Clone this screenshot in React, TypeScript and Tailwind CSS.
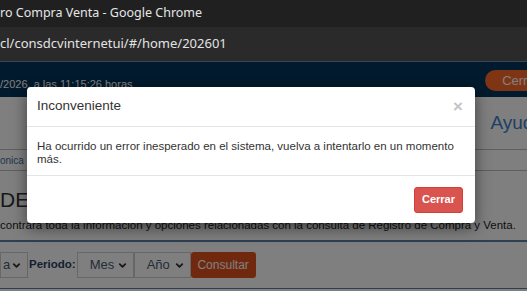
import { ChevronDown } from "lucide-react";

const arial = { fontFamily: '"Liberation Sans", Arial, sans-serif' };

function FakeSelect({ label, className }: { label: string; className: string }) {
  return (
    <div
      className={`flex h-[26px] items-center justify-between border border-[#cfcfcf] bg-white pr-[5px] text-[13px] text-[#4a5a70] ${className}`}
    >
      <span>{label}</span>
      <ChevronDown className="h-[11px] w-[11px] text-[#333]" strokeWidth={4} />
    </div>
  );
}

export default function App() {
  return (
    <div className="flex h-[291px] w-[527px] flex-col overflow-hidden bg-white">
      {/* chrome title bar */}
      <div
        className="flex h-[27px] shrink-0 items-center bg-[#202020] text-[12.5px] text-[#e6e6e6]"
        style={{ fontFamily: '"Noto Sans", sans-serif' }}
      >
        <span className="whitespace-nowrap">ro Compra Venta - Google Chrome</span>
      </div>
      {/* address bar */}
      <div
        className="flex h-[35px] shrink-0 items-center border-b border-[#3d4650] bg-[#2a2a2a] text-[13px] text-[#e3e3e3]"
        style={{ fontFamily: '"Noto Sans", sans-serif' }}
      >
        <span className="whitespace-nowrap">cl/consdcvinternetui/#/home/202601</span>
      </div>

      {/* page */}
      <div className="relative flex-1" style={arial}>
        <div className="flex h-[35px] justify-between overflow-hidden bg-[#04345a]">
          <span className="mt-[17px] whitespace-nowrap text-[11px] leading-none text-white">
            /2026, a las 11:15:26 horas
          </span>
          <div className="-mr-[28px] mt-[8px] flex h-[21px] shrink-0 items-center rounded-full bg-[#ff6a26] pl-[17px] pr-4 text-[13px] text-white">
            Cerrar
          </div>
        </div>

        <div className="flex h-[52px] items-center justify-end overflow-hidden">
          <span className="-mr-[17px] shrink-0 text-[19px] text-[#3a82c8]">Ayuda</span>
        </div>

        <div className="flex h-[22px] border-y border-[#bcbcbc]">
          <div className="flex items-center border-r border-[#bcbcbc] pr-1 text-[10px] text-[#3a6fa0]">
            onica
          </div>
        </div>

        <div className="pt-[18px] text-[21px] leading-none text-[#333]">DE COMPRAS Y VENTAS</div>
        <div className="mt-[8px] whitespace-nowrap text-[11.5px] leading-[14px] text-[#222]">
          contrará toda la información y opciones relacionadas con la consulta de Registro de Compra y Venta.
        </div>

        <div className="mt-[8px] h-[2px] bg-[#5d7ea8]" />

        <div className="mt-[10px] flex items-center">
          <FakeSelect label="a" className="w-[28px] pl-[2px]" />
          <span className="mx-[1px] text-[11.5px] font-bold text-[#283e64]">Periodo:</span>
          <FakeSelect label="Mes" className="w-[57px] pl-[12px]" />
          <FakeSelect label="Año" className="w-[57px] pl-[12px]" />
          <div className="flex h-[26px] w-[65px] items-center justify-center rounded-[3px] bg-[#e0521c] text-[12px] text-white">
            Consultar
          </div>
        </div>
        <div className="mt-[10px] h-[1px] bg-[#5d7ea8]" />

        {/* backdrop */}
        <div className="absolute inset-0 bg-black/50" />

        {/* modal */}
        <div className="absolute left-[27px] top-[25px] w-[448px] rounded-[4px] bg-white shadow-[0_5px_15px_rgba(0,0,0,0.5)]">
          <div className="flex h-[40px] items-center justify-between border-b border-[#e5e5e5] pl-[10px] pr-[12px]">
            <span className="text-[13.5px] text-[#333]">Inconveniente</span>
            <span className="text-[17px] font-bold leading-none text-[#c4c4c4]">×</span>
          </div>
          <div className="h-[49px] border-b border-[#e5e5e5] px-[10px] pt-[13px] text-[11.5px] leading-[13px] text-[#333]">
            Ha ocurrido un error inesperado en el sistema, vuelva a intentarlo en un momento más.
          </div>
          <div className="flex h-[47px] items-center justify-end pr-[12px]">
            <button className="h-[26px] w-[49px] rounded-[3px] border border-[#d43f3a] bg-[#d9534f] text-[11px] font-bold text-white">
              Cerrar
            </button>
          </div>
        </div>
      </div>
    </div>
  );
}
